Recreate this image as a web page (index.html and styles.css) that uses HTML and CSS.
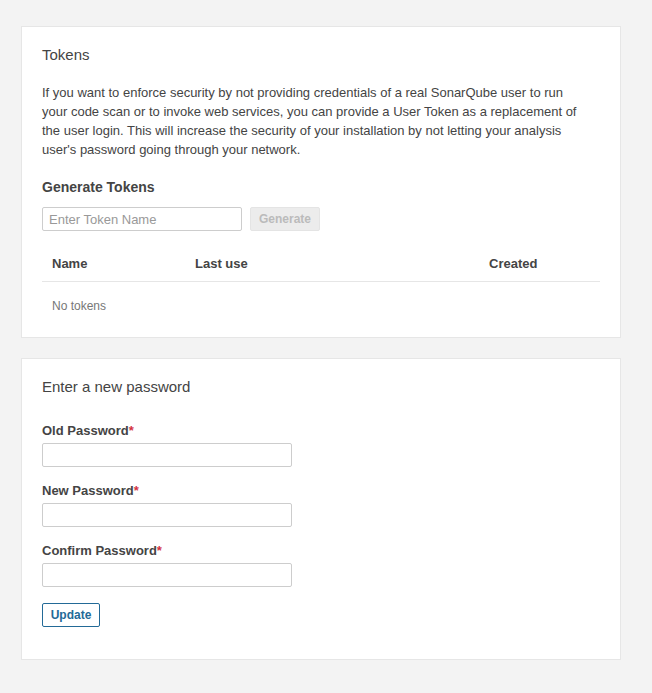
FILE: index.html
```html
<!DOCTYPE html>
<html>
<head>
<meta charset="utf-8">
<link rel="stylesheet" href="styles.css">
</head>
<body>
<div class="page">
  <section class="card">
    <h2 class="card-title">Tokens</h2>
    <p class="desc">If you want to enforce security by not providing credentials of a real SonarQube user to run your code scan or to invoke web services, you can provide a User Token as a replacement of the user login. This will increase the security of your installation by not letting your analysis user's password going through your network.</p>
    <h3 class="sub-title">Generate Tokens</h3>
    <form class="gen-form">
      <input class="token-input" type="text" placeholder="Enter Token Name">
      <button class="btn-disabled" type="button" disabled>Generate</button>
    </form>
    <table class="tokens">
      <thead>
        <tr><th class="col-name">Name</th><th class="col-last">Last use</th><th class="col-created">Created</th></tr>
      </thead>
      <tbody>
        <tr><td class="empty" colspan="3">No tokens</td></tr>
      </tbody>
    </table>
  </section>

  <section class="card card-pw">
    <h2 class="card-title">Enter a new password</h2>
    <form class="pw-form">
      <div class="field">
        <label class="label">Old Password<span class="req">*</span></label>
        <input class="pw-input" type="password">
      </div>
      <div class="field">
        <label class="label">New Password<span class="req">*</span></label>
        <input class="pw-input" type="password">
      </div>
      <div class="field">
        <label class="label">Confirm Password<span class="req">*</span></label>
        <input class="pw-input" type="password">
      </div>
      <button class="btn-update" type="button">Update</button>
    </form>
  </section>
</div>
</body>
</html>
```
FILE: styles.css
```css
* { box-sizing: border-box; }
html, body { margin: 0; padding: 0; }
body {
  background: #f3f3f3;
  font-family: "Liberation Sans", Arial, Helvetica, sans-serif;
  color: #444;
  font-size: 13px;
}
.page {
  padding: 26px 21px;
  display: flex;
  flex-direction: column;
  gap: 20px;
}
.card {
  width: 600px;
  background: #fff;
  border: 1px solid #e6e6e6;
  padding: 20px 20px 16px;
}
.card-pw { padding-bottom: 32px; }
.card-title {
  margin: 0;
  font-size: 15px;
  font-weight: 400;
  line-height: 16px;
  color: #444;
}
.desc {
  margin: 20px 0 0;
  max-width: 540px;
  line-height: 19px;
}
.sub-title {
  margin: 18px 0 0;
  font-size: 14px;
  font-weight: 700;
  line-height: 20px;
}
.gen-form {
  margin-top: 10px;
  display: flex;
  gap: 8px;
}
.token-input, .pw-input {
  height: 24px;
  border: 1px solid #cdcdcd;
  border-radius: 2px;
  padding: 0 6px;
  font-family: inherit;
  font-size: 13px;
  color: #444;
  background: #fff;
}
.token-input { width: 200px; }
.token-input::placeholder { color: #999; }
.btn-disabled {
  height: 24px;
  padding: 0 8px;
  border: 1px solid #e4e4e4;
  border-radius: 2px;
  background: #ececec;
  color: #bbb;
  font-family: inherit;
  font-weight: 700;
  font-size: 12px;
}
.tokens {
  margin-top: 16px;
  width: 558px;
  border-collapse: collapse;
}
.tokens th {
  text-align: left;
  font-weight: 700;
  font-size: 13px;
  line-height: 18px;
  padding: 8px 10px;
  border-bottom: 1px solid #e6e6e6;
}
.col-name { width: 143px; }
.col-last { width: 294px; }
.empty {
  padding: 14px 10px 5px;
  font-size: 12px;
  line-height: 20px;
  color: #777;
}
.pw-form {
  margin-top: 27px;
  display: flex;
  flex-direction: column;
  align-items: flex-start;
}
.field {
  display: flex;
  flex-direction: column;
  margin-bottom: 15px;
}
.label {
  font-weight: 700;
  font-size: 13px;
  line-height: 18px;
  margin-bottom: 3px;
}
.req { color: #d4333f; }
.pw-input { width: 250px; }
.btn-update {
  margin-top: 1px;
  width: 58px;
  height: 24px;
  padding: 0;
  border: 1px solid #236a97;
  border-radius: 2px;
  background: #fff;
  color: #236a97;
  font-family: inherit;
  font-weight: 700;
  font-size: 12px;
}
```
